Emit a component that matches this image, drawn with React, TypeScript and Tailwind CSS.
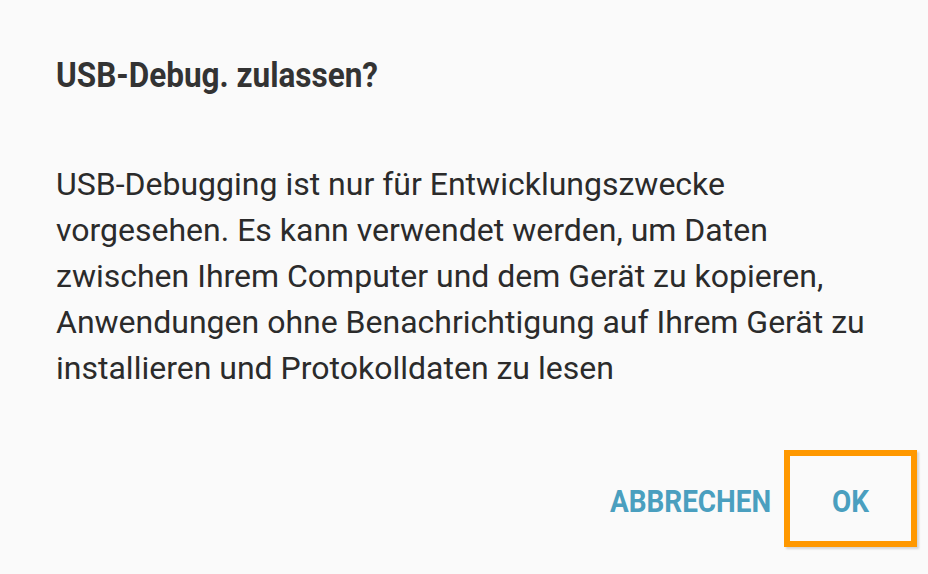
import React from 'react';

const App: React.FC = () => {
  return (
    <div className="w-[928px] h-[574px] bg-[#fafafa] flex flex-col overflow-hidden" style={{ fontFamily: 'Roboto, "Liberation Sans", sans-serif' }}>
      {/* Title */}
      <div className="pl-[56px] pt-[57px]">
        <h1 className="text-[35px] leading-[38px] font-bold text-[#333333] origin-left scale-x-[0.9] whitespace-nowrap">
          USB-Debug. zulassen?
        </h1>
      </div>

      {/* Message */}
      <p className="pl-[56px] pr-[20px] pt-[66px] text-[32px] leading-[46px] text-[#2b2b2b] whitespace-nowrap">
        USB-Debugging ist nur für Entwicklungszwecke<br />
        vorgesehen. Es kann verwendet werden, um Daten<br />
        zwischen Ihrem Computer und dem Gerät zu kopieren,<br />
        Anwendungen ohne Benachrichtigung auf Ihrem Gerät zu<br />
        installieren und Protokolldaten zu lesen
      </p>

      {/* Actions */}
      <div className="flex justify-end items-center pr-[11px] pt-[59px]">
        <button className="h-[97px] pl-[14px] pr-[13px] pt-[8px] text-[31px] font-bold text-[#4a9fbf]">
          <span className="inline-block origin-right scale-x-[0.9]">ABBRECHEN</span>
        </button>
        <button className="w-[133px] h-[97px] border-[6px] border-[#ff9800] shadow-[2px_2px_2px_rgba(0,0,0,0.15)] pt-[8px] text-[31px] font-bold text-[#4a9fbf] flex items-center justify-center">
          <span className="inline-block scale-x-[0.9]">OK</span>
        </button>
      </div>
    </div>
  );
};

export default App;
